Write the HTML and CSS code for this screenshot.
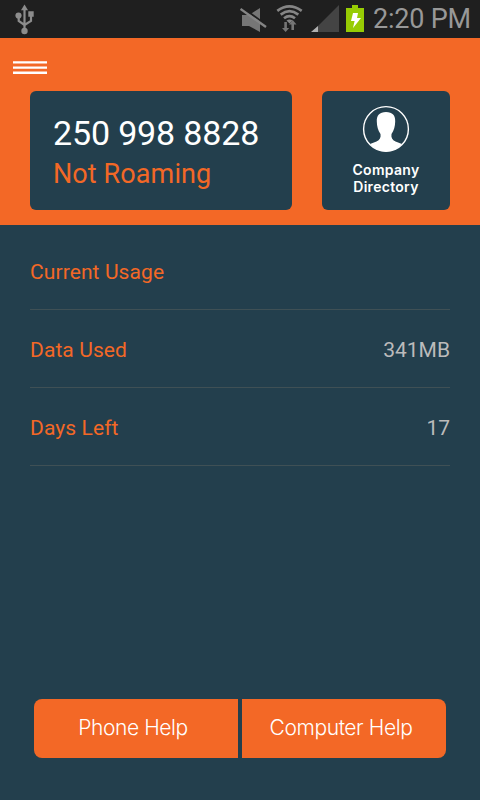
FILE: index.html
```html
<!DOCTYPE html>
<html lang="en">
<head>
    <meta charset="UTF-8">
    <meta name="viewport" content="width=device-width, initial-scale=1.0">
    <title>Usage</title>
    <link rel="stylesheet" href="styles.css">
</head>
<body>
    <div class="status-bar">
        <svg class="usb-icon" width="20" height="38" viewBox="0 0 20 38" fill="none" stroke="#8c8c8c" stroke-width="2.2">
            <path d="M9.500 8v22M3.700 16v5l5.800 4M16 14v7l-6.500 4"/>
            <g fill="#8c8c8c" stroke="none">
                <path d="M9.500 4.500l3.500 5.800H6z"/>
                <circle cx="3.500" cy="15.500" r="3.100"/>
                <path d="M13.300 11.300h5.400v5.400h-5.400z"/>
                <circle cx="9.500" cy="31" r="3.200"/>
            </g>
        </svg>
        <svg class="tray-icons" width="126" height="38" viewBox="0 0 126 38">
            <!-- muted -->
            <path d="M2 15h7l11-7v24L9 26H2z" fill="#767676"/>
            <path d="M1.500 7L27 25.500" stroke="#1f1f1f" stroke-width="2"/>
            <path d="M.5 9L26 27" stroke="#858585" stroke-width="2.400"/>
            <!-- wifi -->
            <g fill="none" stroke="#858585" stroke-width="2.700">
                <path d="M37.300 10.800q12-8.800 24.400 0"/>
                <path d="M40.700 14.600q8.800-6.800 17.600 0"/>
                <path d="M44 18.200q5.500-4.200 11 0"/>
            </g>
            <path d="M46.500 20.500q3-1.800 6 0l-3 3z" fill="#858585"/>
            <path d="M44.300 22h2.600v6h2.300l-3.600 4-3.600-4h2.300zM51.400 30H54v-5.500h2.500L52.700 20l-3.700 4.500h2.400z" fill="#757575"/>
            <!-- signal -->
            <path d="M99 5v27H72z" fill="#444"/>
            <path d="M78 26v6h-7z" fill="#b0b0b0"/>
            <!-- battery -->
            <path d="M112 5h6v3h6v24h-18V8h6z" fill="#97cc04"/>
            <path d="M113 13h5l-1 5h4l-8 10 1.600-7H111z" fill="#fff"/>
        </svg>
        <span class="clock">2:20 PM</span>
    </div>

    <div class="header">
        <svg class="menu-button" width="34" height="14" viewBox="0 0 34 14" stroke="#fff" stroke-width="2.400">
            <path d="M0 1.400h34M0 6.600h34M0 11.800h34"/>
        </svg>
        <div class="cards">
            <div class="card phone">
                <div class="number">250 998 8828</div>
                <div class="roaming">Not Roaming</div>
            </div>
            <div class="card directory">
                <svg width="48" height="48" viewBox="0 0 48 48">
                    <circle cx="24" cy="24" r="22.400" fill="none" stroke="#fff" stroke-width="1.400"/>
                    <path d="M24 7c6.500 0 9.500 3.500 9.200 9.500-.1 5-1.200 9-3.700 12.500-.6 3.800.7 6 4 7.500l6.500 2.500C36.500 43.500 30.500 46.400 24 46.400S11.500 43.500 8 39l6.500-2.500c3.300-1.500 4.600-3.700 4-7.500-2.500-3.500-3.600-7.500-3.700-12.500C14.500 10.500 17.500 7 24 7z" fill="#fff"/>
                </svg>
                <div class="directory-label">Company<br>Directory</div>
            </div>
        </div>
    </div>

    <div class="usage">
        <div class="row"><span>Current Usage</span></div>
        <div class="row"><span>Data Used</span><span class="value">341MB</span></div>
        <div class="row"><span>Days Left</span><span class="value">17</span></div>
    </div>

    <div class="help">
        <div class="help-button phone-help"><span>Phone Help</span></div>
        <div class="help-button computer-help"><span>Computer Help</span></div>
    </div>
</body>
</html>
```
FILE: styles.css
```css
* {
    box-sizing: border-box;
}
body {
    margin: 0;
    height: 800px;
    display: flex;
    flex-direction: column;
    background-color: #233f4d;
    color: #f36826;
    font-family: Roboto, sans-serif;
    overflow: hidden;
}
.status-bar {
    height: 38px;
    flex: none;
    display: flex;
    align-items: center;
    background-color: #1f1f1f;
    padding: 0 9px 0 15px;
}
.tray-icons {
    margin-left: auto;
}
.clock {
    width: 98px;
    margin-left: 7px;
    color: #989898;
    font-size: 27px;
    letter-spacing: -0.2px;
    line-height: 38px;
    white-space: nowrap;
}
.header {
    height: 187px;
    flex: none;
    background-color: #f36826;
    padding: 23px 30px 0;
}
.menu-button {
    display: block;
    margin: 0 0 16px -17px;
}
.cards {
    display: flex;
    justify-content: space-between;
}
.card {
    height: 119px;
    border-radius: 6px;
    background-color: #233f4d;
}
.phone {
    width: 262px;
    padding: 22px 0 0 23px;
    white-space: nowrap;
}
.number {
    color: #fff;
    font-size: 34px;
    letter-spacing: -0.15px;
    line-height: 41px;
}
.roaming {
    font-size: 27px;
    letter-spacing: 0.1px;
    line-height: 40px;
}
.directory {
    width: 128px;
    padding-top: 14px;
    display: flex;
    flex-direction: column;
    align-items: center;
}
.directory-label {
    margin-top: 8px;
    color: #fff;
    font: 600 14px/17px Inter, sans-serif;
    letter-spacing: 0.3px;
    text-align: center;
}
.usage {
    padding: 7px 30px 0;
    font-size: 21px;
}
.row {
    height: 78px;
    padding-top: 2px;
    display: flex;
    justify-content: space-between;
    align-items: center;
    letter-spacing: 0.1px;
    border-bottom: 1px solid #3f5055;
}
.value {
    color: #bbb;
    letter-spacing: 0;
}
.help {
    margin: auto 34px 42px;
    display: flex;
    gap: 4px;
}
.help-button {
    flex: 1;
    height: 59px;
    padding-right: 6px;
    background-color: #f36826;
    color: #fff;
    font: 300 21px/57px Inter, sans-serif;
    letter-spacing: -0.4px;
    text-align: center;
}
.phone-help {
    border-radius: 8px 0 0 8px;
}
.computer-help {
    border-radius: 0 8px 8px 0;
}
```
